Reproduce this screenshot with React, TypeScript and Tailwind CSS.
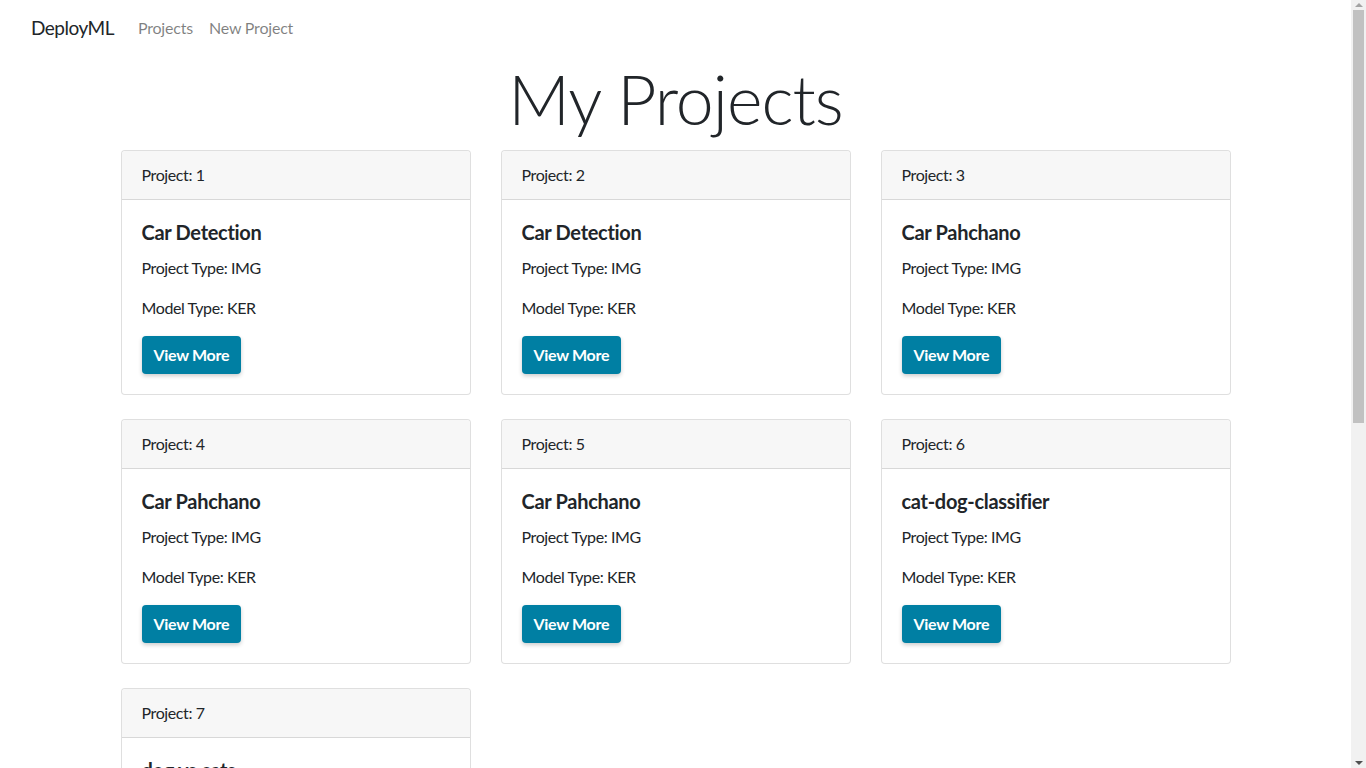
import React from 'react';

type Project = {
  id: number;
  name: string;
  projectType: string;
  modelType: string;
};

const projects: Project[] = [
  { id: 1, name: 'Car Detection', projectType: 'IMG', modelType: 'KER' },
  { id: 2, name: 'Car Detection', projectType: 'IMG', modelType: 'KER' },
  { id: 3, name: 'Car Pahchano', projectType: 'IMG', modelType: 'KER' },
  { id: 4, name: 'Car Pahchano', projectType: 'IMG', modelType: 'KER' },
  { id: 5, name: 'Car Pahchano', projectType: 'IMG', modelType: 'KER' },
  { id: 6, name: 'cat-dog-classifier', projectType: 'IMG', modelType: 'KER' },
  { id: 7, name: 'dog vs cats', projectType: 'IMG', modelType: 'KER' },
];

const ProjectCard = ({ project }: { project: Project }) => {
  return (
    <div className="rounded border border-black/[0.125] bg-white">
      <div className="bg-[#f7f7f7] border-b border-black/[0.125] px-5 py-3 leading-6 rounded-t">
        Project: {project.id}
      </div>
      <div className="p-5">
        <h5 className="text-xl font-bold leading-6 mb-3 tracking-[-0.3px]">{project.name}</h5>
        <p className="leading-6 mb-4">Project Type: {project.projectType}</p>
        <p className="leading-6 mb-4">Model Type: {project.modelType}</p>
        <button className="bg-[#007fa3] text-white font-bold leading-6 px-3 py-[7px] rounded tracking-[-0.3px] shadow-[0_2px_4px_rgba(0,0,0,0.2)]">
          View More
        </button>
      </div>
    </div>
  );
};

// fake browser scrollbar, the reference page overflows
const Scrollbar = () => (
  <div className="fixed top-0 right-0 w-[15px] h-screen bg-[#f1f1f1] flex flex-col items-center">
    <div className="h-[10px] flex items-center justify-center">
      <div className="w-0 h-0 border-x-[4px] border-x-transparent border-b-[4px] border-b-[#a3a3a3]" />
    </div>
    <div className="w-[11px] h-[413px] bg-[#c1c1c1]" />
    <div className="flex-1" />
    <div className="h-[10px] flex items-center justify-center">
      <div className="w-0 h-0 border-x-[4px] border-x-transparent border-t-[4px] border-t-[#505050]" />
    </div>
  </div>
);

export default function App() {
  return (
    <div className="min-h-screen bg-white text-[#212529] text-base tracking-[-0.4px] font-['Lato','Liberation_Sans',sans-serif]">
      <div className="mr-[15px]">
        <nav className="flex items-center h-14 px-[31px]">
          <a className="text-[19px] tracking-[-0.5px] mr-4 leading-[30px] py-[5px]" href="#">
            DeployML
          </a>
          <a className="px-2 text-black/50 tracking-[-0.2px]" href="#">
            Projects
          </a>
          <a className="px-2 text-black/50 tracking-[-0.2px]" href="#">
            New Project
          </a>
        </nav>

        <div className="w-[1140px] mx-auto px-[15px] pb-[420px]">
          <h1 className="text-[68px] font-light leading-[86px] tracking-[-1px] text-center mb-2">My Projects</h1>
          <div className="grid grid-cols-3 gap-x-[30px] gap-y-6">
            {projects.map((p) => (
              <ProjectCard key={p.id} project={p} />
            ))}
          </div>
        </div>
      </div>
      <Scrollbar />
    </div>
  );
}
